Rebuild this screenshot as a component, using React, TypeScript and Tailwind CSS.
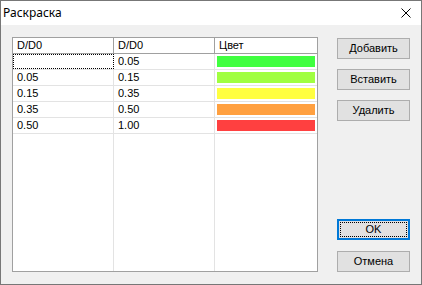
import React from 'react';

const rows: { from: string; to: string; color: string }[] = [
  { from: '', to: '0.05', color: 'bg-[#40ff40]' },
  { from: '0.05', to: '0.15', color: 'bg-[#a0ff40]' },
  { from: '0.15', to: '0.35', color: 'bg-[#ffff40]' },
  { from: '0.35', to: '0.50', color: 'bg-[#ffa040]' },
  { from: '0.50', to: '1.00', color: 'bg-[#ff4040]' },
];

const font = { fontFamily: '"Liberation Sans", Arial, sans-serif' };

const Button: React.FC<{ label: string; focused?: boolean }> = ({ label, focused }) => (
  <div
    className={`h-[21px] w-[73px] flex items-center justify-center bg-[#e1e1e1] text-[11px] text-black ${
      focused ? 'border-2 border-[#0078d7] p-[1px]' : 'border border-[#adadad]'
    }`}
  >
    {focused ? (
      <div className="w-full h-full flex items-center justify-center border border-dotted border-black">{label}</div>
    ) : (
      label
    )}
  </div>
);

const App: React.FC = () => {
  return (
    <div className="w-[422px] h-[285px] border border-[#777777] bg-[#f0f0f0] flex flex-col" style={font}>
      {/* Title bar */}
      <div className="h-[24px] bg-white flex items-center justify-between pl-[2px] pr-[10px] shrink-0">
        <span className="text-[12px] text-black leading-[24px]" style={{ fontFamily: '"Noto Sans", sans-serif' }}>
          Раскраска
        </span>
        <svg width="10" height="10" viewBox="0 0 10 10">
          <path d="M0.5 0.5 L9.5 9.5 M9.5 0.5 L0.5 9.5" stroke="#000" strokeWidth="1" />
        </svg>
      </div>

      {/* Body */}
      <div className="flex-1 flex pt-[12px] pb-[12px] pl-[11px] pr-[10px] gap-[19px]">
        {/* Table */}
        <div className="w-[306px] h-[235px] border border-[#a0a0a0] bg-white flex flex-col text-[11px] text-black leading-[15px]">
          <div className="flex h-[16px] border-b border-[#a0a0a0] shrink-0">
            <div className="w-[101px] border-r border-[#a0a0a0] pl-[4px]">D/D0</div>
            <div className="w-[101px] border-r border-[#a0a0a0] pl-[4px]">D/D0</div>
            <div className="flex-1 pl-[4px]">Цвет</div>
          </div>
          {rows.map((r, i) => (
            <div key={i} className="flex h-[16px] border-b border-[#e3e3e3] shrink-0">
              {i === 0 ? (
                <div className="w-[101px] border border-dotted border-black" />
              ) : (
                <div className="w-[101px] border-r border-[#e3e3e3] pl-[4px]">{r.from}</div>
              )}
              <div className="w-[101px] border-r border-[#e3e3e3] pl-[4px]">{r.to}</div>
              <div className="flex-1 px-[2px] py-[2px]">
                <div className={`h-[11px] w-full ${r.color}`} />
              </div>
            </div>
          ))}
          <div className="flex flex-1">
            <div className="w-[101px] border-r border-[#e3e3e3]" />
            <div className="w-[101px] border-r border-[#e3e3e3]" />
            <div className="flex-1" />
          </div>
        </div>

        {/* Buttons */}
        <div className="flex flex-col pt-[1px] h-[235px]">
          <div className="flex flex-col gap-[10px]">
            <Button label="Добавить" />
            <Button label="Вставить" />
            <Button label="Удалить" />
          </div>
          <div className="mt-auto flex flex-col gap-[11px]">
            <Button label="OK" focused />
            <Button label="Отмена" />
          </div>
        </div>
      </div>
    </div>
  );
};

export default App;
